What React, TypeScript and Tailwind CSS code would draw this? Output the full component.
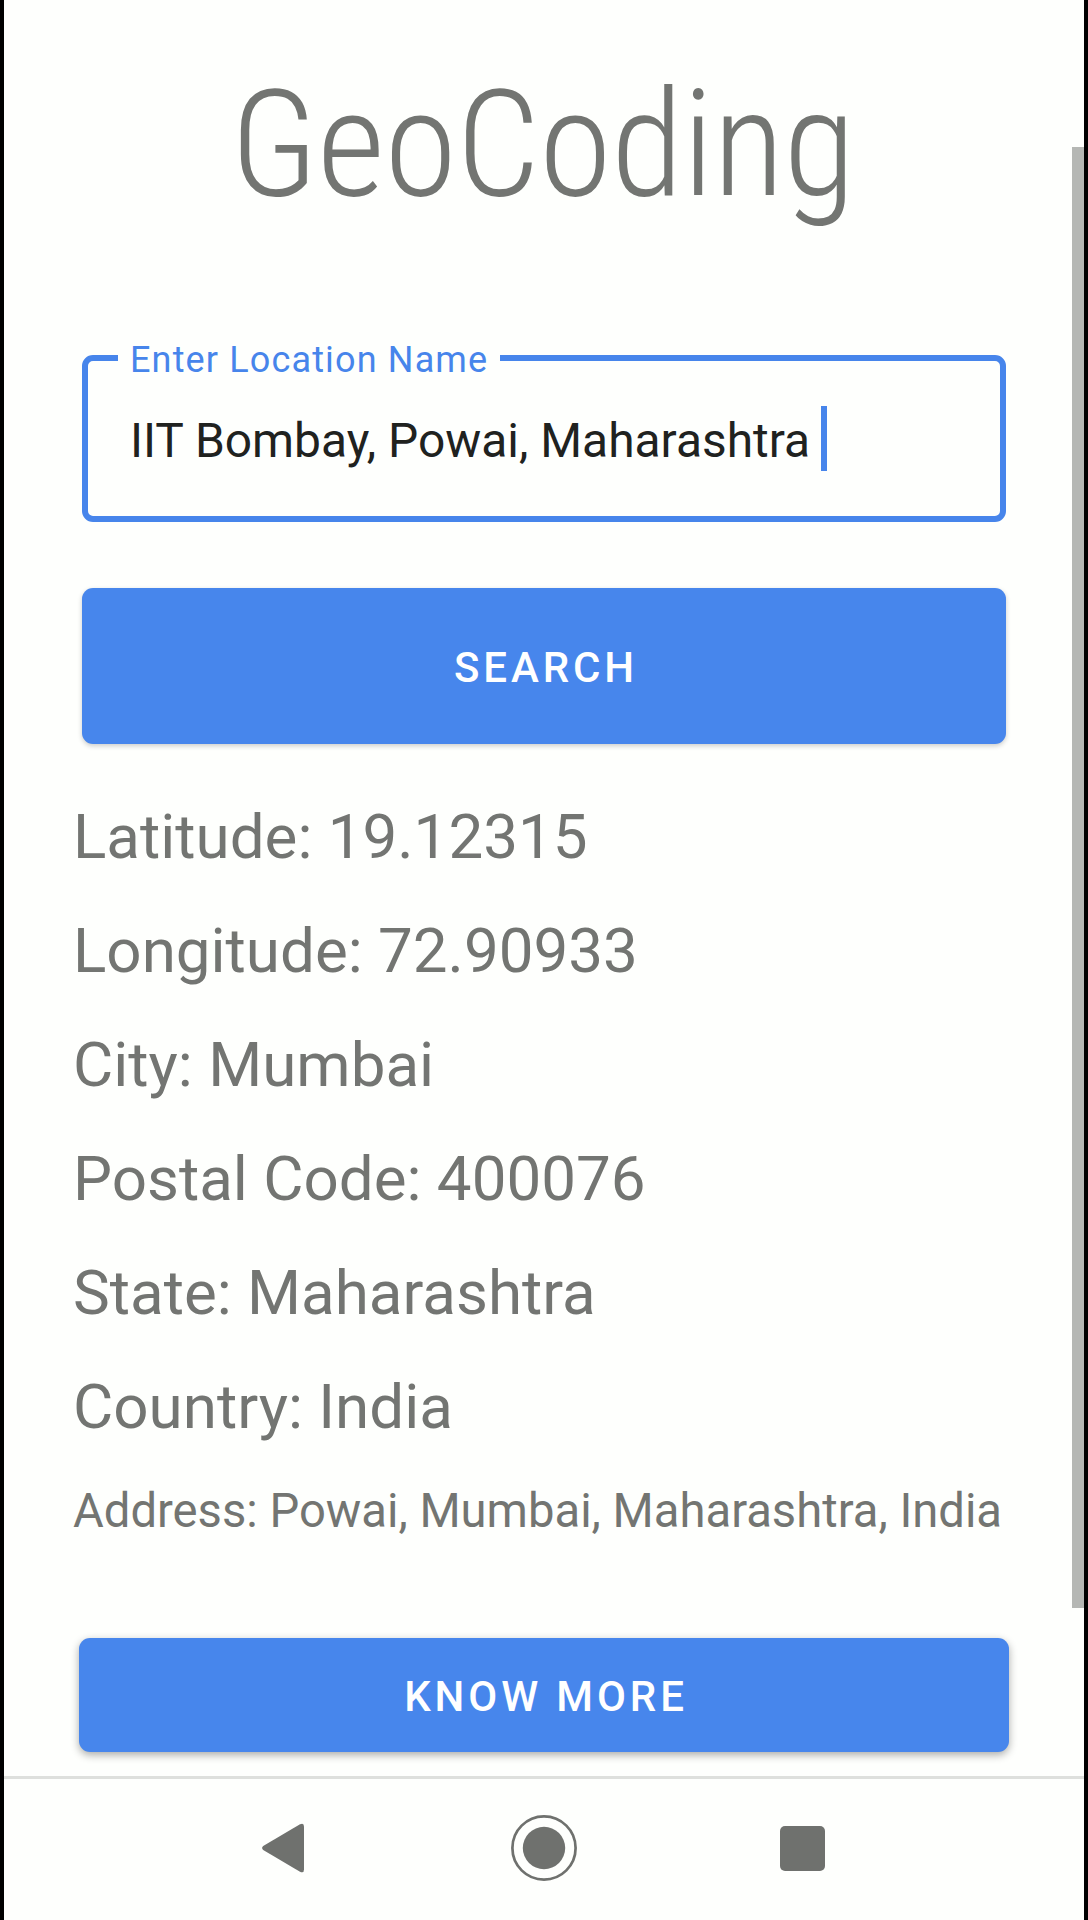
import React from "react";

const details = [
  "Latitude: 19.12315",
  "Longitude: 72.90933",
  "City: Mumbai",
  "Postal Code: 400076",
  "State: Maharashtra",
  "Country: India",
];

export default function App() {
  return (
    <div className="flex h-[1920px] w-[1088px] flex-col overflow-hidden border-x-4 border-black bg-[#fefffd] font-['Roboto',sans-serif] text-[#737572]">
      <main className="relative flex h-[1776px] flex-col">
        <h1 className="mt-[44px] h-[212px] pr-[3px] text-center text-[148px] leading-[202px] font-light tracking-[-0.75px] [font-stretch:75%]">
          GeoCoding
        </h1>
        <div className="relative mx-[78px] mt-[99px] h-[167px] rounded-[11px] border-[6px] border-[#4785eb]">
          <span className="absolute -top-[19px] left-[30px] bg-[#fefffd] px-[12px] text-[36px] leading-[36px] tracking-[1.15px] whitespace-nowrap text-[#4785eb]">
            Enter Location Name
          </span>
          <div className="flex h-full items-center pl-[42px] text-[47.9px] whitespace-nowrap text-[#20221f]">
            <span className="pt-[6px]">IIT Bombay, Powai, Maharashtra</span>
            <span className="ml-[11px] h-[65px] w-[6px] bg-[#4785eb]" />
          </div>
        </div>
        <button className="mx-[78px] mt-[66px] h-[156px] shrink-0 rounded-[11px] bg-[#4786ec] pt-[2px] pl-[4px] text-[42px] font-medium tracking-[3.9px] text-white shadow-[0_2px_5px_#0003]">
          SEARCH
        </button>
        <div className="mt-[36px] pl-[69px] text-[61.9px]">
          {details.map((line) => (
            <p key={line} className="h-[114px] leading-[114px] whitespace-nowrap">
              {line}
            </p>
          ))}
          <p className="h-[93px] text-[47.2px] leading-[94px] whitespace-nowrap">
            Address: Powai, Mumbai, Maharashtra, India
          </p>
        </div>
        <button className="mx-[75px] mt-[81px] h-[114px] shrink-0 rounded-[11px] bg-[#4786ec] pt-[2px] pl-[4px] text-[42px] font-medium tracking-[3.9px] text-white shadow-[0_3px_8px_#0005]">
          KNOW MORE
        </button>
        <div className="absolute top-[147px] right-0 h-[1461px] w-[12px] bg-[#b5b7b4]" />
      </main>
      <nav className="flex h-[144px] items-start border-t-[3px] border-[#dee0dd] pt-[36px] pl-[258px] text-[#6f716e]">
        <button aria-label="Back" className="h-[66px]">
          <svg width="42" height="66" viewBox="0 0 42 66" fill="currentColor">
            <path d="M1.2 31 38 9.3Q42 7.5 42 11.5V54.5Q42 58.5 38 56.7L1.2 35Q-1 33 1.2 31Z" />
          </svg>
        </button>
        <button aria-label="Home" className="ml-[207px] h-[66px]">
          <svg width="66" height="66" viewBox="0 0 66 66">
            <circle cx="33" cy="33" r="31.6" fill="none" stroke="currentColor" strokeWidth="2.7" />
            <circle cx="33" cy="33" r="21.2" fill="currentColor" />
          </svg>
        </button>
        <button aria-label="Recent apps" className="mt-[10.5px] ml-[202.5px] size-[45.5px] rounded-[5px] bg-[#6f716e]" />
      </nav>
    </div>
  );
}
